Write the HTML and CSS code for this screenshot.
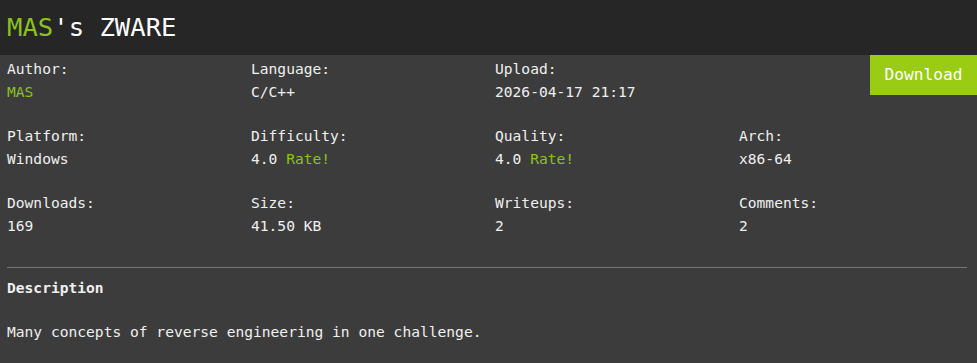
FILE: index.html
```html
<!DOCTYPE html>
<html>
<head>
<meta charset="utf-8">
<link rel="stylesheet" href="styles.css">
</head>
<body>
<header class="top">
  <h1 class="title"><span class="accent">MAS</span>'s ZWARE</h1>
</header>
<main class="content">
  <div class="grid">
    <div class="cell"><div class="label">Author:</div><div class="value accent">MAS</div></div>
    <div class="cell"><div class="label">Language:</div><div class="value">C/C++</div></div>
    <div class="cell"><div class="label">Upload:</div><div class="value">2026-04-17 21:17</div></div>
    <div class="cell cell-btn"><a class="download">Download</a></div>

    <div class="cell"><div class="label">Platform:</div><div class="value">Windows</div></div>
    <div class="cell"><div class="label">Difficulty:</div><div class="value">4.0 <span class="accent">Rate!</span></div></div>
    <div class="cell"><div class="label">Quality:</div><div class="value">4.0 <span class="accent">Rate!</span></div></div>
    <div class="cell"><div class="label">Arch:</div><div class="value">x86-64</div></div>

    <div class="cell"><div class="label">Downloads:</div><div class="value">169</div></div>
    <div class="cell"><div class="label">Size:</div><div class="value">41.50 KB</div></div>
    <div class="cell"><div class="label">Writeups:</div><div class="value">2</div></div>
    <div class="cell"><div class="label">Comments:</div><div class="value">2</div></div>
  </div>
  <hr class="sep">
  <h2 class="desc-title">Description</h2>
  <p class="desc">Many concepts of reverse engineering in one challenge.</p>
</main>
</body>
</html>
```
FILE: styles.css
```css
html, body {
  margin: 0;
  padding: 0;
}
body {
  background: #3c3c3c;
  color: #f0f0f0;
  font-family: "DejaVu Sans Mono", "Liberation Mono", monospace;
  font-size: 14.6px;
  line-height: 23px;
  height: 363px;
  overflow: hidden;
}
.top {
  background: #262626;
  height: 55px;
  display: flex;
  align-items: center;
  padding-left: 7px;
}
.title {
  margin: 0;
  font-size: 25.6px;
  font-weight: normal;
  color: #ffffff;
  line-height: 30px;
  padding-bottom: 2px;
}
.accent {
  color: #8cc21c;
}
.content {
  padding-left: 7px;
  padding-top: 2px;
}
.grid {
  display: grid;
  grid-template-columns: 244px 244px 244px 1fr;
  grid-template-rows: 46px 46px 46px;
  row-gap: 21px;
}
.cell-btn {
  margin-top: -2px;
  display: flex;
  justify-content: flex-end;
  align-items: flex-start;
}
.download {
  display: block;
  background: #99cc13;
  color: #ffffff;
  width: 107px;
  height: 40px;
  line-height: 40px;
  text-align: center;
  font-size: 16.2px;
}
.sep {
  border: 0;
  border-top: 1px solid #777777;
  margin: 30px 10px 0 0;
  height: 0;
}
.desc-title {
  margin: 8px 0 0;
  font-size: 14.6px;
  font-weight: bold;
  line-height: 23px;
}
.desc {
  margin: 21px 0 0;
}
```
